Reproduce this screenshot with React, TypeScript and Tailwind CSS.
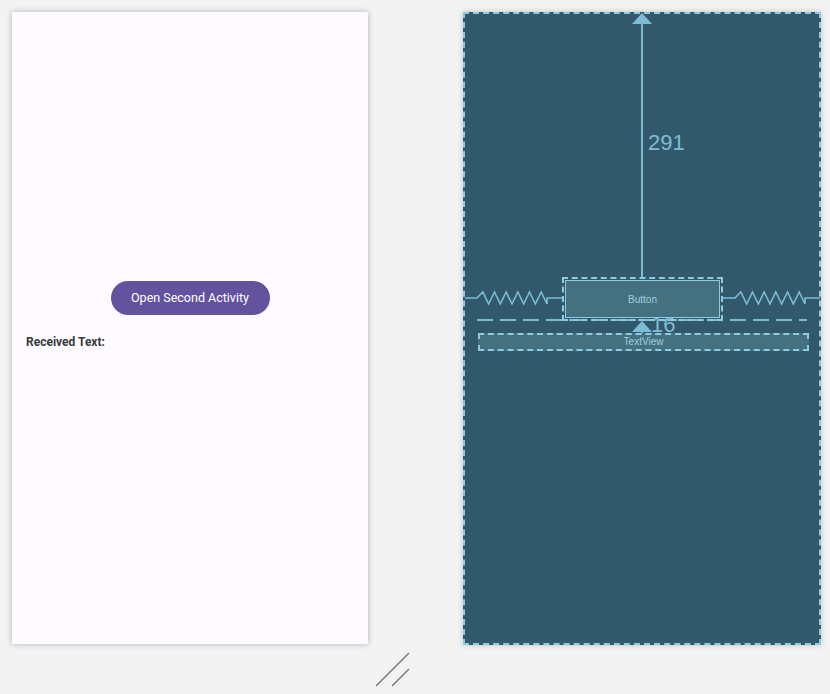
import React from 'react';

const line = '#7fbcd3';

const Spring = ({ x1, x2, z1, z2, y }: { x1: number; x2: number; z1: number; z2: number; y: number }) => {
  const teeth = 6;
  const step = (z2 - z1) / teeth;
  let d = `M${x1} ${y} L${z1} ${y}`;
  for (let i = 0; i < teeth; i++) {
    const sx = z1 + i * step;
    d += ` L${sx + step * 0.5} ${y - 6} L${sx + step} ${y + 6}`;
  }
  d += ` L${z2} ${y} L${x2} ${y}`;
  return <path d={d} fill="none" stroke={line} strokeWidth={1.6} />;
};

const DesignPanel: React.FC = () => (
  <div className="w-[356px] h-[632px] bg-[#fdfbff] shadow-[0_0_6px_rgba(0,0,0,0.28)] flex flex-col items-center font-['Roboto',sans-serif]">
    <button className="mt-[269px] w-[159px] h-[34px] rounded-full bg-[#63539f] text-white text-[12.5px] font-normal">
      Open Second Activity
    </button>
    <p className="self-start mt-[21px] ml-[14px] text-[12px] font-bold text-[#3a3a3a] leading-none">Received Text:</p>
  </div>
);

const BlueprintPanel: React.FC = () => (
  <div className="relative w-[358px] h-[633px] bg-[#31596b] border-2 border-dashed border-[#8fcbe0] shadow-[0_0_6px_rgba(0,0,0,0.2)] font-['Liberation_Sans',sans-serif]">
    <svg className="absolute -left-[2px] -top-[2px]" width={358} height={633}>
      {/* top constraint */}
      <line x1={179} y1={8} x2={179} y2={266} stroke={line} strokeWidth={2} />
      <polygon points="169,12 189,12 179,1" fill={line} />
      <text x={185} y={138} fontSize={22} fill={line} fontFamily="Liberation Sans, sans-serif">291</text>
      {/* springs */}
      <Spring x1={2} x2={99} z1={14} z2={84} y={286} />
      <Spring x1={259} x2={357} z1={272} z2={342} y={286} />
      {/* baseline dashes */}
      <line x1={14} y1={308} x2={344} y2={308} stroke={line} strokeWidth={2} strokeDasharray="16 7" />
      {/* bottom margin */}
      <line x1={179} y1={318} x2={179} y2={321} stroke={line} strokeWidth={2} />
      <polygon points="169,320 189,320 179,309" fill={line} />
      <text x={188} y={320} fontSize={22} fill={line} fontFamily="Liberation Sans, sans-serif">16</text>
    </svg>
    <div className="absolute left-[97px] top-[263px] w-[161px] h-[44px] border-2 border-dashed border-[#8fcbe0] p-[1px]">
      <div className="w-full h-full bg-[#45707f] border border-[#8fcbe0] flex items-center justify-center text-[10px] text-[#9dcfe0]">
        Button
      </div>
    </div>
    <div className="absolute left-[13px] top-[319px] w-[331px] h-[18px] bg-[#45707f] border-2 border-dashed border-[#8fcbe0] flex items-center justify-center text-[10px] text-[#9dcfe0] leading-none">
      TextView
    </div>
  </div>
);

export default function App() {
  return (
    <div className="w-[830px] h-[694px] bg-[#f3f3f3] overflow-hidden flex flex-col">
      <div className="flex pt-[12px] pl-[12px] gap-[95px]">
        <DesignPanel />
        <BlueprintPanel />
      </div>
      <div className="flex justify-center pl-[1px] mt-[7px]">
        <svg width={36} height={36} className="ml-[-46px]">
          <line x1={1} y1={34} x2={34} y2={1} stroke="#707070" strokeWidth={1.3} />
          <line x1={17} y1={34} x2={34} y2={17} stroke="#707070" strokeWidth={1.3} />
        </svg>
      </div>
    </div>
  );
}
